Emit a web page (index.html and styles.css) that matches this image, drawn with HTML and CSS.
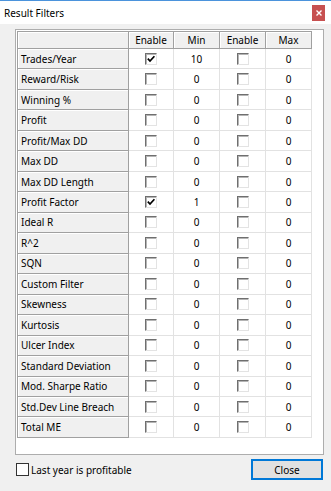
FILE: index.html
```html
<!DOCTYPE html>
<html lang="en">
<head>
  <meta charset="UTF-8">
  <title>Result Filters</title>
  <link rel="stylesheet" href="styles.css">
</head>
<body>
  <div class="window">
    <div class="titlebar">
      <span class="title">Result Filters</span>
      <span class="close-x">
        <svg width="6" height="6" viewBox="0 0 6 6"><path d="M0.5 0.5L5.5 5.5M5.5 0.5L0.5 5.5" stroke="#fff" stroke-width="1.4"/></svg>
      </span>
    </div>

    <div class="content">
      <div class="panel">
        <div class="grid" id="filterGrid">
          <div class="hd"></div>
          <div class="hd">Enable</div>
          <div class="hd">Min</div>
          <div class="hd">Enable</div>
          <div class="hd">Max</div>
        </div>
      </div>

      <div class="footer">
        <label class="last-year"><span class="box-lg"></span>Last year is profitable</label>
        <button class="close-btn">Close</button>
      </div>
    </div>
  </div>

  <script>
    const filters = [
      ["Trades/Year", true, 10],
      ["Reward/Risk", false, 0],
      ["Winning %", false, 0],
      ["Profit", false, 0],
      ["Profit/Max DD", false, 0],
      ["Max DD", false, 0],
      ["Max DD Length", false, 0],
      ["Profit Factor", true, 1],
      ["Ideal R", false, 0],
      ["R^2", false, 0],
      ["SQN", false, 0],
      ["Custom Filter", false, 0],
      ["Skewness", false, 0],
      ["Kurtosis", false, 0],
      ["Ulcer Index", false, 0],
      ["Standard Deviation", false, 0],
      ["Mod. Sharpe Ratio", false, 0],
      ["Std.Dev Line Breach", false, 0],
      ["Total ME", false, 0]
    ];

    const tick = '<svg width="10" height="10" viewBox="0 0 10 10"><path d="M1.8 4.6L4 7L8.4 2.2" fill="none" stroke="#000" stroke-width="1.7"/></svg>';

    function box(checked) {
      return `<span class="box">${checked ? tick : ""}</span>`;
    }

    const grid = document.getElementById("filterGrid");
    filters.forEach(([name, minOn, min]) => {
      grid.insertAdjacentHTML("beforeend", `
        <div class="name">${name}</div>
        <div class="cell">${box(minOn)}</div>
        <div class="cell">${min}</div>
        <div class="cell">${box(false)}</div>
        <div class="cell">0</div>
      `);
    });
  </script>
</body>
</html>
```

FILE: styles.css
```css
* {
  box-sizing: border-box;
}
body {
  margin: 0;
  background: #f0f0f0;
  font-family: "Noto Sans", sans-serif;
  font-size: 10px;
  color: #000;
}
.window {
  width: 331px;
  height: 491px;
  display: flex;
  flex-direction: column;
}
.titlebar {
  height: 24px;
  border-top: 1px solid #4b93dc;
  background: #fff;
  display: flex;
  align-items: center;
  justify-content: space-between;
  padding: 0 6px 0 4px;
}
.close-x {
  width: 13px;
  height: 16px;
  background: #c75050;
  display: flex;
  align-items: center;
  justify-content: center;
}
.content {
  padding: 5px 7px 0 15px;
}
.panel {
  background: #fff;
  border: 1px solid #adadad;
  height: 426px;
  padding: 1px;
}
.grid {
  display: grid;
  grid-template-columns: 111px 45px 46px 46px 46px;
  grid-template-rows: 17px repeat(19, 20.47px);
  width: max-content;
  border-left: 1px solid #a0a0a0;
  border-top: 1px solid #a0a0a0;
}
.hd, .name {
  background: #f0f0f0;
  border-right: 1px solid #a0a0a0;
  border-bottom: 1px solid #a0a0a0;
  box-shadow: inset 1px 1px 0 #fff;
  display: flex;
  align-items: center;
}
.hd {
  justify-content: center;
}
.name {
  padding-left: 3px;
}
.cell {
  border-right: 1px solid #e2e2e2;
  border-bottom: 1px solid #e2e2e2;
  display: flex;
  align-items: center;
  justify-content: center;
}
.box {
  width: 12px;
  height: 12px;
  background: #fff;
  border: 1px solid;
  border-color: #6f6f6f #e3e3e3 #e3e3e3 #6f6f6f;
  box-shadow: inset 1px 1px 0 #b4b4b4;
  display: flex;
  align-items: center;
  justify-content: center;
}
.footer {
  margin-top: 4px;
  padding-left: 1px;
  display: flex;
  align-items: center;
  justify-content: space-between;
}
.last-year {
  display: flex;
  align-items: center;
  gap: 2px;
}
.box-lg {
  width: 13px;
  height: 13px;
  background: #fff;
  border: 1px solid #333;
}
.close-btn {
  width: 72px;
  height: 21px;
  margin-right: 1px;
  background: #e1e1e1;
  border: 1px solid #0078d7;
  box-shadow: inset 0 0 0 1px #0078d7;
  font-family: "Noto Sans", sans-serif;
  font-size: 10px;
  color: #000;
  padding: 0;
}
```
